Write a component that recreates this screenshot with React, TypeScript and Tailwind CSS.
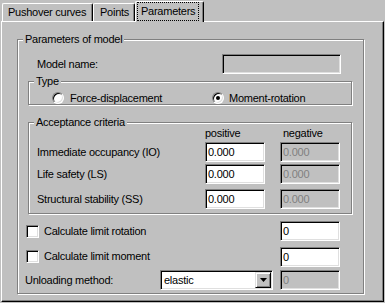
const sunken =
  "border border-t-[#808080] border-l-[#808080] border-r-white border-b-white shadow-[inset_1px_1px_#000,inset_-1px_-1px_#dfdfdf]";

function Field({ value, disabled, className }: { value: string; disabled?: boolean; className: string }) {
  return (
    <div
      className={`${sunken} flex h-[20px] items-center pl-[2px] ${
        disabled ? "bg-[#c0c0c0] text-[#808080]" : "bg-white text-black"
      } ${className}`}
    >
      {value}
    </div>
  );
}

function Group({ label, className, children }: { label: string; className: string; children?: React.ReactNode }) {
  return (
    <div className={`relative border border-[#808080] shadow-[inset_1px_1px_#fff,1px_1px_#fff] ${className}`}>
      <span className="absolute left-[5px] top-[-7px] bg-[#c0c0c0] px-[2px] leading-[13px]">{label}</span>
      {children}
    </div>
  );
}

function Radio({ checked }: { checked?: boolean }) {
  return (
    <span
      className={`flex h-[12px] w-[12px] items-center justify-center rounded-full bg-white ${sunken}`}
    >
      {checked && <span className="h-[4px] w-[4px] rounded-full bg-black" />}
    </span>
  );
}

function Checkbox() {
  return <span className={`block h-[13px] w-[13px] bg-white ${sunken}`} />;
}

function Tab({ label, className }: { label: string; className: string }) {
  return (
    <div
      className={`flex h-[18px] items-center rounded-t-[2px] border-l border-t border-r border-l-white border-t-white border-r-black shadow-[inset_-1px_0_#808080] ${className}`}
    >
      {label}
    </div>
  );
}

export default function App() {
  return (
    <div className="h-[303px] w-[385px] overflow-hidden bg-[#c0c0c0] font-['Liberation_Sans',Arial,sans-serif] text-[11px] leading-[13px] tracking-[-0.25px] text-black">
      {/* tabs */}
      <div className="flex h-[21px] items-end pl-[2px]">
        <Tab label="Pushover curves" className="w-[91px] pl-[5px]" />
        <Tab label="Points" className="w-[42px] pl-[6px]" />
        <div className="relative z-10 -mb-[1px] flex h-[21px] w-[69px] items-start rounded-t-[2px] border-l border-t border-r border-l-white border-t-white border-r-black bg-[#c0c0c0] shadow-[inset_-1px_0_#808080]">
          <span className="ml-[1px] flex h-[19px] items-center border border-dotted border-black px-[3px]">Parameters</span>
        </div>
      </div>

      {/* page */}
      <div className="ml-[1px] h-[281px] w-[383px] border-l border-t border-r border-b border-l-white border-t-white border-r-black border-b-black shadow-[inset_-1px_-1px_#808080]">
        <Group label="Parameters of model" className="ml-[15px] mt-[17px] h-[255px] w-[347px]">
          <div className="mt-[14px] flex h-[20px] items-center">
            <span className="ml-[19px] w-[185px]">Model name:</span>
            <Field value="" disabled className="w-[119px]" />
          </div>

          <Group label="Type" className="ml-[10px] mt-[7px] h-[24px] w-[324px]">
            <div className="ml-[23px] mt-[10px] flex h-[12px] items-center">
              <div className="flex w-[160px] items-center">
                <Radio />
                <span className="ml-[6px]">Force-displacement</span>
              </div>
              <div className="flex items-center">
                <Radio checked />
                <span className="ml-[5px]">Moment-rotation</span>
              </div>
            </div>
          </Group>

          <Group label="Acceptance criteria" className="ml-[10px] mt-[17px] h-[92px] w-[324px]">
            <div className="mt-[4px] flex">
              <span className="ml-[176px] w-[78px]">positive</span>
              <span>negative</span>
            </div>
            {[
              ["Immediate occupancy (IO)", "mt-[2px]"],
              ["Life safety (LS)", "mt-[2px]"],
              ["Structural stability (SS)", "mt-[5px]"],
            ].map(([name, gap]) => (
              <div key={name} className={`flex h-[20px] items-center ${gap}`}>
                <span className="w-[176px] pl-[8px]">{name}</span>
                <Field value="0.000" className="w-[60px]" />
                <Field value="0.000" disabled className="ml-[15px] w-[60px]" />
              </div>
            ))}
          </Group>

          <div className="mt-[7px] flex h-[20px] items-center">
            <div className="flex w-[262px] items-center pl-[8px]">
              <Checkbox />
              <span className="ml-[5px]">Calculate limit rotation</span>
            </div>
            <Field value="0" className="w-[60px]" />
          </div>
          <div className="mt-[6px] flex h-[20px] items-center">
            <div className="-mt-[2px] flex w-[262px] items-center pl-[8px]">
              <Checkbox />
              <span className="ml-[5px]">Calculate limit moment</span>
            </div>
            <Field value="0" className="w-[60px]" />
          </div>
          <div className="mt-[3px] flex h-[20px] items-center">
            <span className="w-[142px] pl-[7px]">Unloading method:</span>
            <div className={`${sunken} flex h-[20px] w-[113px] items-center bg-white`}>
              <span className="flex-1 pl-[3px]">elastic</span>
              <span className="mr-[1px] flex h-[16px] w-[16px] items-center justify-center border border-t-[#dfdfdf] border-l-[#dfdfdf] border-r-black border-b-black bg-[#c0c0c0] shadow-[inset_1px_1px_#fff,inset_-1px_-1px_#808080]">
                <svg width="7" height="4" viewBox="0 0 7 4">
                  <path d="M0 0h7L3.5 4z" fill="#000" />
                </svg>
              </span>
            </div>
            <Field value="0" disabled className="ml-[7px] w-[60px]" />
          </div>
        </Group>
      </div>
    </div>
  );
}
